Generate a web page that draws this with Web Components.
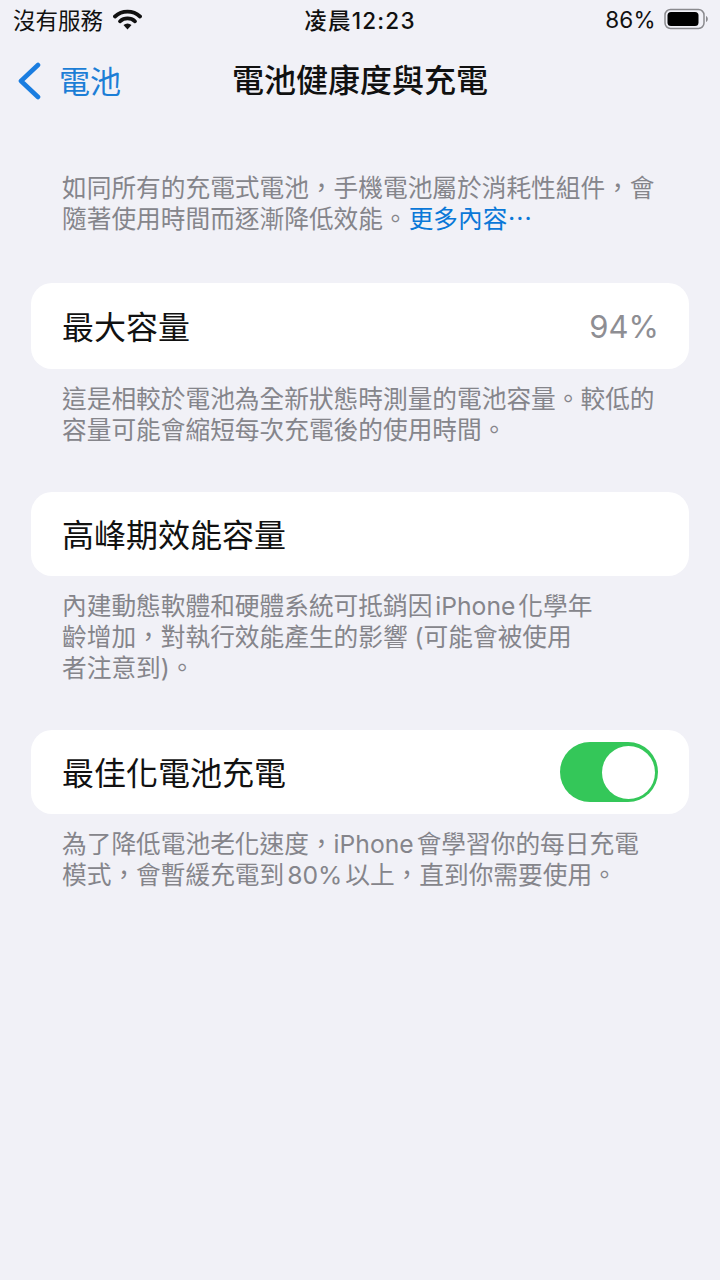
<!DOCTYPE html>
<html lang="zh-Hant">
<head>
<meta charset="utf-8">
<title>電池健康度與充電</title>
<style>
    html, body { margin: 0; padding: 0; background: #f1f1f7; }
    body {
        width: 720px;
        height: 1280px;
        overflow: hidden;
        font-family: "Inter", "Noto Sans CJK TC", sans-serif;
    }
    .tight { word-spacing: -4px; }
</style>
</head>
<body>
<status-bar></status-bar>
<nav-bar back="電池" title="電池健康度與充電"></nav-bar>
<settings-list>
    <note-text style="margin-top: 55px">如同所有的充電式電池&#xFF0C;手機電池屬於消耗性組件&#xFF0C;會<br>隨著使用時間而逐漸降低效能。<a-link>更多內容⋯</a-link></note-text>
    <setting-row style="margin-top: 48px; height: 86px" label="最大容量"><span slot="end" style="color:#8e8e93;font-size:31px;margin-right:-1px">94%</span></setting-row>
    <note-text style="margin-top: 15px">這是相較於電池為全新狀態時測量的電池容量。較低的<br>容量可能會縮短每次充電後的使用時間。</note-text>
    <setting-row style="margin-top: 46px" label="高峰期效能容量"></setting-row>
    <note-text style="margin-top: 15px">內建動態軟體和硬體系統可抵銷因<span class="tight"> iPhone </span>化學年<br>齡增加&#xFF0C;對執行效能產生的影響 (可能會被使用<br>者注意到)。</note-text>
    <setting-row style="margin-top: 46px" label="最佳化電池充電"><toggle-switch slot="end"></toggle-switch></setting-row>
    <note-text style="margin-top: 15px">為了降低電池老化速度&#xFF0C;iPhone<span class="tight"> </span>會學習你的每日充電<br>模式&#xFF0C;會暫緩充電到<span class="tight"> 80% </span>以上&#xFF0C;直到你需要使用。</note-text>
</settings-list>
<script>
class StatusBar extends HTMLElement {
    constructor() {
        super()
        const shadow = this.attachShadow({mode: 'open'});
        shadow.innerHTML = `
        <style>
            :host {
                display: grid;
                grid-template-columns: 1fr auto 1fr;
                align-items: center;
                height: 38px;
                padding: 0 13px;
                font-size: 22.5px;
                color: #111;
            }
            .left, .right { display: flex; align-items: center; }
            .left { gap: 10px; }
            .right { justify-content: flex-end; gap: 8px; margin-right: -1px; }
            .right span { letter-spacing: .3px; }
            .time { font-weight: 500; letter-spacing: 1.2px; }
            svg { display: block; }
        </style>
        <div class="left">
            <span>沒有服務</span>
            <svg width="29" height="21" viewBox="0 0 29 21">
                <path d="M2 7.5C9 1 20 1 27 7.5" fill="none" stroke="#111" stroke-width="3.8" stroke-linecap="round"/>
                <path d="M7 12.300c4.300-3.800 10.700-3.800 15 0" fill="none" stroke="#111" stroke-width="3.800" stroke-linecap="round"/>
                <path d="M10.500 16 14.500 20.500 18.500 16C16 14 13 14 10.500 16Z" fill="#111"/>
            </svg>
        </div>
        <span class="time">凌晨12:23</span>
        <div class="right">
            <span>86%</span>
            <svg width="44" height="22" viewBox="0 0 44 22">
                <rect x="1" y="1.500" width="39" height="19" rx="5.500" fill="none" stroke="#8a8a8e" stroke-width="1.500"/>
                <rect x="3.500" y="4" width="31" height="14" rx="3.500" fill="#000"/>
                <path d="M42 8v6c1.200-.5 1.800-1.700 1.800-3s-.6-2.500-1.800-3Z" fill="#8a8a8e"/>
            </svg>
        </div>
        `
    }
}

class NavBar extends HTMLElement {
    constructor() {
        super()
        const shadow = this.attachShadow({mode: 'open'});
        shadow.innerHTML = `
        <style>
            :host {
                display: grid;
                grid-template-columns: 1fr auto 1fr;
                align-items: center;
                height: 80px;
                padding: 0 18px;
            }
            .back {
                display: flex;
                align-items: center;
                gap: 18px;
                color: #1c7ed6;
                font-size: 31px;
            }
            .back span { padding-top: 2px; }
            .title {
                font-size: 32px;
                font-weight: 500;
                color: #111;
            }
            svg { display: block; margin-top: 5px; margin-left: -1px; }
        </style>
        <div class="back">
            <svg width="24" height="38" viewBox="0 0 24 38">
                <path d="M21 3 4 19 21 35" fill="none" stroke="#1a7de0" stroke-width="4.600" stroke-linecap="round" stroke-linejoin="round"/>
            </svg>
            <span></span>
        </div>
        <div class="title"></div>
        <div></div>
        `
        shadow.querySelector('.back span').textContent = this.getAttribute('back')
        shadow.querySelector('.title').textContent = this.getAttribute('title')
    }
}

class SettingsList extends HTMLElement {
    constructor() {
        super()
        const shadow = this.attachShadow({mode: 'open'});
        shadow.innerHTML = `
        <style>
            :host {
                display: flex;
                flex-direction: column;
                padding: 0 31px;
            }
        </style>
        <slot></slot>
        `
    }
}

class NoteText extends HTMLElement {
    constructor() {
        super()
        const shadow = this.attachShadow({mode: 'open'});
        shadow.innerHTML = `
        <style>
            :host {
                display: block;
                padding: 0 31px;
                font-size: 24.700px;
                line-height: 31px;
                color: #85858b;
                white-space: nowrap;
            }
        </style>
        <slot></slot>
        `
    }
}

class ALink extends HTMLElement {
    constructor() {
        super()
        const shadow = this.attachShadow({mode: 'open'});
        // no whitespace around the slot: this one is inline
        shadow.innerHTML = `<style>:host { display: inline; color: #0a78d8; margin-left: 1px; }</style><slot></slot>`
    }
}

class SettingRow extends HTMLElement {
    constructor() {
        super()
        const shadow = this.attachShadow({mode: 'open'});
        shadow.innerHTML = `
        <style>
            :host {
                display: flex;
                align-items: center;
                justify-content: space-between;
                height: 84px;
                padding: 0 31px;
                background: #fff;
                border-radius: 21px;
                font-size: 32px;
                color: #111;
            }
            .label { margin-top: -2px; }
        </style>
        <span class="label"></span>
        <slot name="end"></slot>
        `
        shadow.querySelector('.label').textContent = this.getAttribute('label')
    }
}

class ToggleSwitch extends HTMLElement {
    constructor() {
        super()
        const shadow = this.attachShadow({mode: 'open'});
        shadow.innerHTML = `
        <style>
            :host {
                display: flex;
                justify-content: flex-end;
                align-items: center;
                box-sizing: border-box;
                width: 98px;
                height: 60px;
                padding: 3px;
                border-radius: 30px;
                background: #34c759;
            }
            .knob {
                width: 53px;
                height: 53px;
                border-radius: 50%;
                background: #fff;
            }
        </style>
        <div class="knob"></div>
        `
    }
}

customElements.define('status-bar', StatusBar)
customElements.define('nav-bar', NavBar)
customElements.define('settings-list', SettingsList)
customElements.define('note-text', NoteText)
customElements.define('a-link', ALink)
customElements.define('setting-row', SettingRow)
customElements.define('toggle-switch', ToggleSwitch)
</script>
</body>
</html>
